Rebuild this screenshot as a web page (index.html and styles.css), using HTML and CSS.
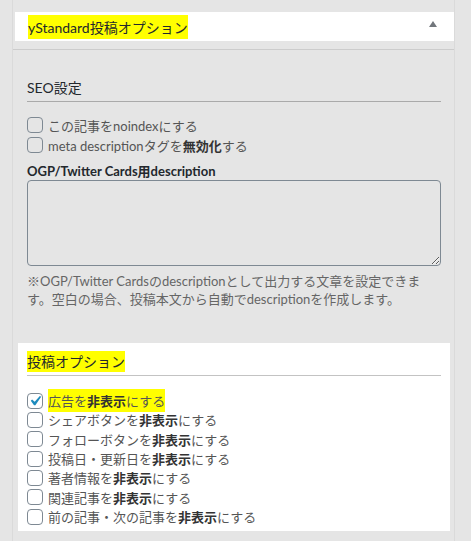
FILE: index.html
```html
<!DOCTYPE html>
<html lang="ja">
  <head>
    <meta charset="UTF-8" />
    <meta name="viewport" content="width=device-width, initial-scale=1.0" />
    <link rel="stylesheet" href="styles.css">
  </head>
  <body>
    <div class="postbox">
      <div class="postbox-header">
        <h2 class="hndle"><span class="marker">yStandard投稿オプション</span></h2>
        <span class="toggle-arrow"></span>
      </div>
      <div class="inside">
        <h3 class="section-title">SEO設定</h3>
        <div class="check-list">
          <label class="check-row"><span class="box"></span>この記事をnoindexにする</label>
          <label class="check-row"><span class="box"></span>meta descriptionタグを<b>無効化</b>する</label>
        </div>
        <p class="field-label">OGP/Twitter Cards用description</p>
        <textarea class="desc-input"></textarea>
        <p class="help">※OGP/Twitter Cardsのdescriptionとして出力する文章を設定できます。空白の場合、投稿本文から自動でdescriptionを作成します。</p>

        <div class="option-card">
          <h3 class="section-title"><span class="marker">投稿オプション</span></h3>
          <div class="check-list tight">
            <label class="check-row">
              <span class="box checked">
                <svg viewBox="0 0 20 20" width="20" height="20"><path d="M14.83 4.89l1.34.94-5.81 8.38H9.02L5.78 9.67l1.34-1.25 2.57 2.4z" fill="#1e8cbe"/></svg>
              </span><span class="marker">広告を<b>非表示</b>にする</span>
            </label>
            <label class="check-row"><span class="box"></span>シェアボタンを<b>非表示</b>にする</label>
            <label class="check-row"><span class="box"></span>フォローボタンを<b>非表示</b>にする</label>
            <label class="check-row"><span class="box"></span>投稿日・更新日を<b>非表示</b>にする</label>
            <label class="check-row"><span class="box"></span>著者情報を<b>非表示</b>にする</label>
            <label class="check-row"><span class="box"></span>関連記事を<b>非表示</b>にする</label>
            <label class="check-row"><span class="box"></span>前の記事・次の記事を<b>非表示</b>にする</label>
          </div>
        </div>
      </div>
    </div>
  </body>
</html>
```
FILE: styles.css
```css
body {
  margin: 0;
  background-color: #e5e5e5;
  font-family: "Lato", "Noto Sans CJK JP", sans-serif;
  color: #444;
}

.postbox {
  margin: 0 16px 0 12px;
  min-height: 541px;
  border-left: 1px solid #dadada;
  border-right: 1px solid #dadada;
  box-sizing: border-box;
}

.postbox-header {
  position: relative;
  padding-top: 12px;
  padding-bottom: 8px;
  border-bottom: 1px solid #ccc;
}

.hndle {
  margin: 0 0 0 2px;
  height: 29px;
  padding-left: 13px;
  display: flex;
  align-items: center;
  background-color: #fff;
  font-size: 14px;
  font-weight: normal;
  color: #23282d;
}

.toggle-arrow {
  position: absolute;
  right: 17px;
  top: 21px;
  width: 0;
  height: 0;
  border-left: 4px solid transparent;
  border-right: 4px solid transparent;
  border-bottom: 6px solid #72777c;
}

.marker {
  background-color: #ffff00;
  padding: 2px 0;
}

.inside {
  padding: 0 13px 0 14px;
}

.section-title {
  margin: 28px 0 0;
  padding-bottom: 3px;
  border-bottom: 1px solid #aaa;
  font-size: 14px;
  font-weight: normal;
  line-height: 20px;
  color: #23282d;
}

.check-list {
  margin-top: 13px;
  display: flex;
  flex-direction: column;
}

.check-row {
  display: flex;
  align-items: center;
  height: 20px;
  font-size: 13px;
  color: #555;
}

.check-row b {
  color: #333;
}

.check-list.tight .check-row {
  height: 19.33px;
}

.box {
  position: relative;
  width: 16px;
  height: 16px;
  margin-right: 5px;
  border: 1px solid #7e8993;
  border-radius: 4px;
  box-sizing: border-box;
  flex-shrink: 0;
}

.box svg {
  position: absolute;
  left: -3px;
  top: -3px;
}

.field-label {
  margin: 7px 0 0;
  font-size: 13px;
  font-weight: bold;
  line-height: 18px;
  color: #23282d;
}

.desc-input {
  display: block;
  width: 100%;
  height: 86px;
  margin: 0;
  box-sizing: border-box;
  border: 1px solid #7e8993;
  border-radius: 4px;
  background: transparent;
}

.help {
  margin: 6px 0 0;
  font-size: 13px;
  line-height: 18px;
  color: #666;
}

.option-card {
  margin: 35px -9px 0;
  padding: 9px 9px 5px;
  background-color: #fff;
}

.option-card .section-title {
  margin-top: 0;
  padding-bottom: 3px;
  border-bottom-color: #c3c3c3;
}

.option-card .check-list {
  margin-top: 15px;
}
```
